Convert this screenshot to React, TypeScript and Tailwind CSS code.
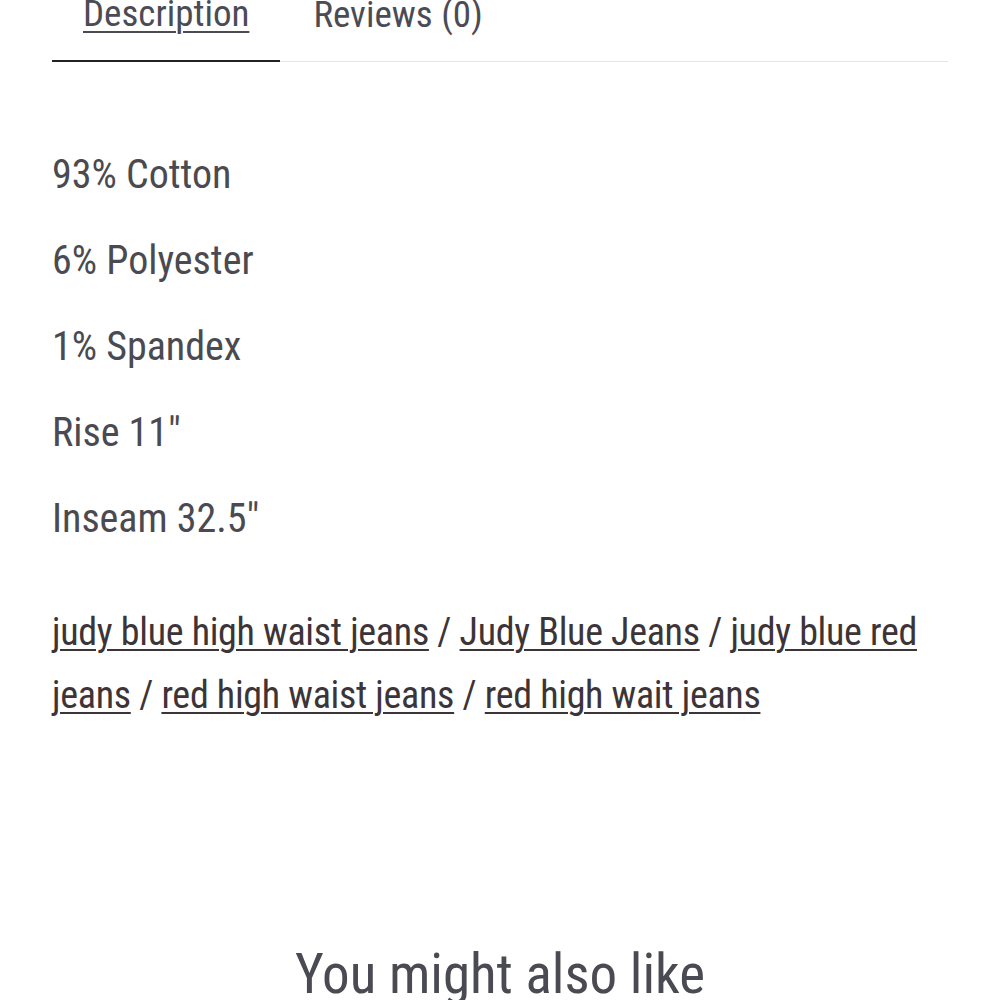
const tags = [
  "judy blue high waist jeans",
  "Judy Blue Jeans",
  "judy blue red jeans",
  "red high waist jeans",
  "red high wait jeans",
];

const specs = ["93% Cotton", "6% Polyester", "1% Spandex", "Rise 11″", "Inseam 32.5″"];

const ProductTabs = () => {
  return (
    <div className="-mt-[10px] flex border-b border-[#e5e5e5]">
      <button className="-mb-px border-b-2 border-[#222] px-[31px] pb-[22px] text-[37px] leading-[48px] text-[#4b4b55] underline decoration-2 underline-offset-[5px]">
        Description
      </button>
      <button className="ml-[2px] px-[31px] pb-[22px] text-[37px] leading-[48px] text-[#4b4b55]">
        Reviews (0)
      </button>
    </div>
  );
};

export default function App() {
  return (
    <div className="min-h-screen overflow-hidden bg-white px-[52px] font-['Roboto_Condensed',Roboto,sans-serif] font-stretch-condensed">
      <ProductTabs />

      <div className="mt-[89px] flex flex-col gap-[38px]">
        {specs.map((line) => (
          <p key={line} className="text-[40px] leading-[48px] text-[#4a4a50]">
            {line}
          </p>
        ))}
      </div>

      <p className="mt-[58px] text-[38px] leading-[63px] tracking-[-0.3px] text-[#3d3437]">
        {tags.map((tag, i) => (
          <span key={tag}>
            <a href="#" className="underline decoration-2 underline-offset-[4px]">
              {tag}
            </a>
            {i < tags.length - 1 && " / "}
          </span>
        ))}
      </p>

      <h2 className="mt-[212px] text-center text-[55px] leading-[70px] text-[#4a4a52]">
        You might also like
      </h2>
    </div>
  );
}
